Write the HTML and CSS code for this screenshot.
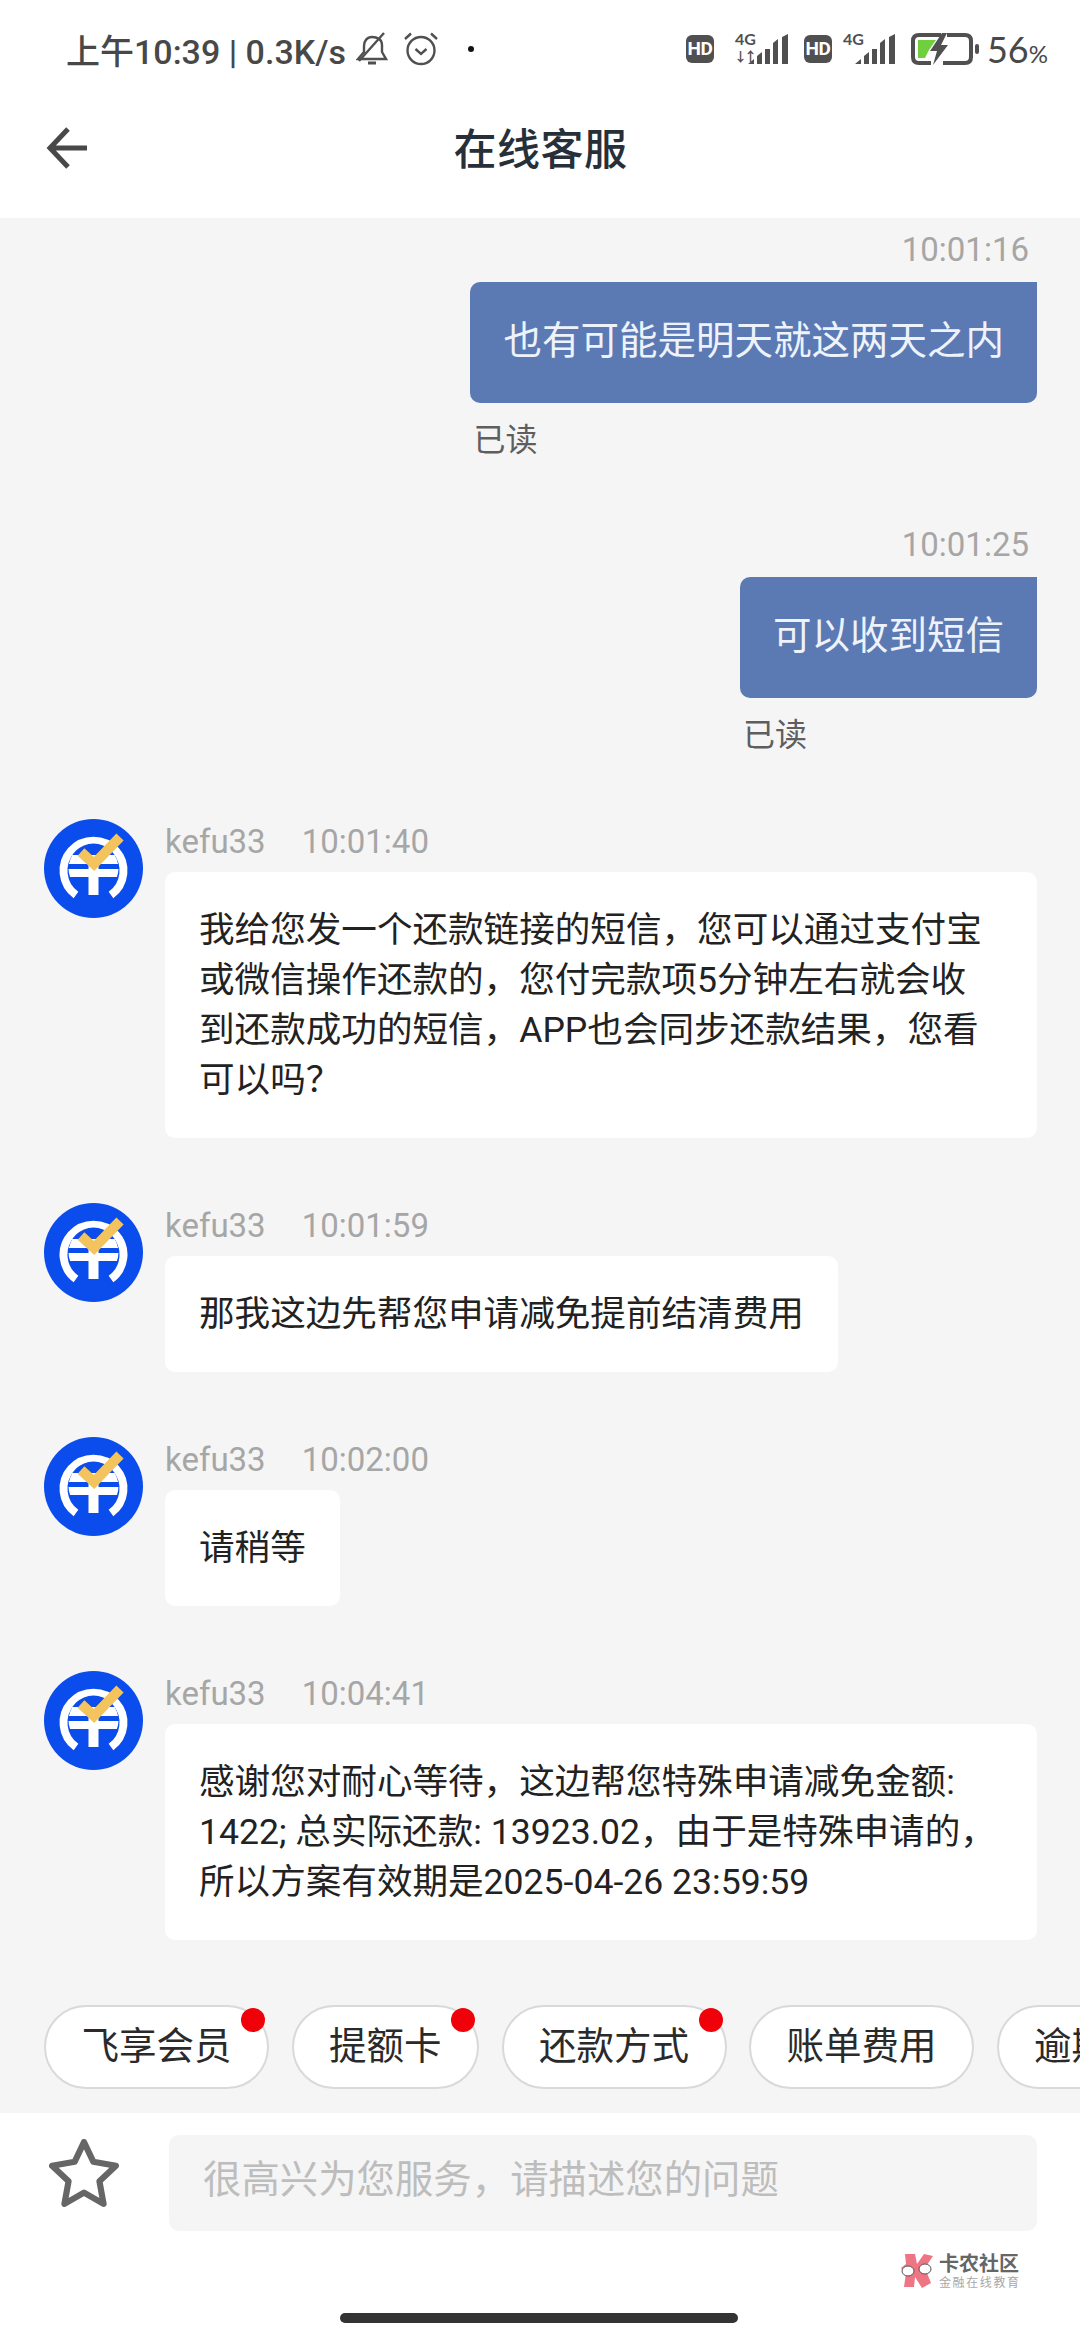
FILE: index.html
```html
<!DOCTYPE html>
<html lang="zh-CN">
<head>
  <meta charset="UTF-8">
  <title>在线客服</title>
  <link rel="stylesheet" href="styles.css">
</head>
<body>
  <svg width="0" height="0" class="defs">
    <clipPath id="ball"><circle cx="49.5" cy="49.5" r="25"/></clipPath>
    <symbol id="avatar" viewBox="0 0 99 99">
      <circle cx="49.5" cy="49.5" r="49.5" fill="#0b4cec"/>
      <path d="M32 76 A30 30 0 1 1 67 76" fill="none" stroke="#fff" stroke-width="8"/>
      <g clip-path="url(#ball)">
        <rect x="24" y="24" width="51" height="52" fill="#0b4cec"/>
        <rect x="24" y="36" width="51" height="9" fill="#fff"/>
        <rect x="24" y="50" width="51" height="8" fill="#fff"/>
      </g>
      <rect x="44.5" y="42" width="10" height="34" fill="#fff"/>
      <path d="M37 33 L50 45 L76 18" fill="none" stroke="#f3c45d" stroke-width="10"/>
    </symbol>
    <symbol id="signal" viewBox="0 0 40 30">
      <path d="M0 30 L6 25 V30Z M9 22 L14 18 V30 H9Z M17 15 H22 V30 H17Z M25 9 L30 5 V30 H25Z M34 3 L40 0 V30 H34Z" fill="#505050"/>
    </symbol>
  </svg>

  <div class="phone">
    <div class="status">
      <div class="status-left">
        <span>上午10:39 | 0.3K/s</span>
        <svg class="bell" width="32" height="34" viewBox="0 0 32 34" fill="none" stroke="#505050" stroke-width="2.4">
          <path d="M2 27 H30 L26 20 V13 C26 7 21 5 16 5 C11 5 8 9 8 14 V20 Z"/>
          <path d="M3 29 L28 1"/>
          <path d="M12 31 H20" stroke-width="3"/>
        </svg>
        <svg class="clock" width="34" height="34" viewBox="0 0 34 34" fill="none" stroke="#505050" stroke-width="2.4">
          <circle cx="17" cy="18.5" r="13.5"/>
          <path d="M11.5 17 L17 22 L22.5 17"/>
          <path d="M1 7 L7 1.5 M33 7 L27 1.5"/>
        </svg>
        <span class="dot"></span>
      </div>
      <div class="status-right">
        <span class="hd">HD</span>
        <div class="net">
          <span class="net-label">4G</span>
          <span class="arrows">↓↑</span>
          <svg class="bars"><use href="#signal"/></svg>
        </div>
        <span class="hd">HD</span>
        <div class="net net-short">
          <span class="net-label">4G</span>
          <svg class="bars"><use href="#signal"/></svg>
        </div>
        <svg class="battery" width="70" height="32" viewBox="0 0 70 32">
          <path d="M30 2 H8 Q2 2 2 8 V24 Q2 30 8 30 H20 M36 2 H54 Q60 2 60 8 V24 Q60 30 54 30 H32" fill="none" stroke="#505050" stroke-width="4"/>
          <path d="M7 7 H25 L18 17 L14 25 H7Z" fill="#6fcf3f"/>
          <path d="M31 0 L19 18 H26 L22 32 L37 12 H30 L36 0Z" fill="#505050"/>
          <rect x="64" y="11" width="4" height="10" rx="2" fill="#505050"/>
        </svg>
        <span class="pct">56<small>%</small></span>
      </div>
    </div>

    <header class="nav">
      <svg class="back" width="42" height="42" viewBox="0 0 42 42" fill="none" stroke="#484848" stroke-width="5">
        <path d="M22 2 L4 21 L22 40 M4 21 H41"/>
      </svg>
      <h1>在线客服</h1>
    </header>

    <main class="chat">
      <div class="mine">
        <div class="time">10:01:16</div>
        <div class="bubble-blue">也有可能是明天就这两天之内</div>
        <div class="read">已读</div>
      </div>
      <div class="mine">
        <div class="time">10:01:25</div>
        <div class="bubble-blue">可以收到短信</div>
        <div class="read">已读</div>
      </div>

      <div class="theirs">
        <svg class="avatar"><use href="#avatar"/></svg>
        <div class="theirs-body">
          <div class="meta"><span>kefu33</span><span>10:01:40</span></div>
          <div class="bubble bubble-wide">我给您发一个还款链接的短信，您可以通过支付宝或微信操作还款的，您付完款项5分钟左右就会收到还款成功的短信，APP也会同步还款结果，您看可以吗？</div>
        </div>
      </div>
      <div class="theirs">
        <svg class="avatar"><use href="#avatar"/></svg>
        <div class="theirs-body">
          <div class="meta"><span>kefu33</span><span>10:01:59</span></div>
          <div class="bubble">那我这边先帮您申请减免提前结清费用</div>
        </div>
      </div>
      <div class="theirs">
        <svg class="avatar"><use href="#avatar"/></svg>
        <div class="theirs-body">
          <div class="meta"><span>kefu33</span><span>10:02:00</span></div>
          <div class="bubble">请稍等</div>
        </div>
      </div>
      <div class="theirs">
        <svg class="avatar"><use href="#avatar"/></svg>
        <div class="theirs-body">
          <div class="meta"><span>kefu33</span><span>10:04:41</span></div>
          <div class="bubble">感谢您对耐心等待，这边帮您特殊申请减免金额: 1422; 总实际还款: 13923.02，由于是特殊申请的，所以方案有效期是2025-04-26 23:59:59</div>
        </div>
      </div>
    </main>

    <div class="chips">
      <div class="chip has-dot">飞享会员</div>
      <div class="chip has-dot">提额卡</div>
      <div class="chip has-dot">还款方式</div>
      <div class="chip">账单费用</div>
      <div class="chip">逾期</div>
    </div>

    <footer class="bottom">
      <div class="input-row">
        <svg class="star" width="70" height="68" viewBox="2 1 68 66" fill="none" stroke="#666" stroke-width="6" stroke-linejoin="round">
          <path d="M36 4 L45 23 L67 27 L51 42 L55 64 L36 53 L17 64 L21 42 L5 27 L27 23Z"/>
        </svg>
        <div class="input">很高兴为您服务，请描述您的问题</div>
      </div>
      <div class="mark">
        <svg width="34" height="36" viewBox="0 0 34 36">
          <path d="M5 1 H15 L17 11 L24 1 L33 3 L25 15 L31 30 L22 35 L15 24 L14 34 L4 34 L6 20 L1 15 L6 11Z" fill="#ee7583"/>
          <ellipse cx="8" cy="18" rx="6" ry="5" fill="#fff" stroke="#555" stroke-width="1"/>
          <ellipse cx="25" cy="16" rx="6" ry="5" fill="#fff" stroke="#555" stroke-width="1"/>
        </svg>
        <div class="mark-text">
          <div class="mark-title">卡农社区</div>
          <div class="mark-sub">金融在线教育</div>
        </div>
      </div>
      <div class="home-bar"></div>
    </footer>
  </div>
</body>
</html>
```

FILE: styles.css
```css
* {
  box-sizing: border-box;
}
body {
  margin: 0;
  background-color: #f5f5f5;
  font-family: Roboto, "Noto Sans CJK SC", sans-serif;
}
.defs {
  display: block;
  height: 0;
}
.phone {
  width: 1080px;
  height: 2340px;
  display: flex;
  flex-direction: column;
  overflow: hidden;
}

/* status bar */
.status {
  height: 98px;
  flex: none;
  padding: 0 32px 0 66px;
  background-color: #fff;
  display: flex;
  justify-content: space-between;
  align-items: center;
  color: #484848;
}
.status-left {
  display: flex;
  align-items: center;
  font-size: 34px;
  font-weight: 500;
  white-space: nowrap;
}
.bell {
  margin-left: 10px;
}
.clock {
  margin-left: 16px;
}
.dot {
  width: 6px;
  height: 6px;
  margin-left: 30px;
  border-radius: 50%;
  background-color: #111;
}
.status-right {
  display: flex;
  align-items: center;
  height: 32px;
}
.hd {
  width: 28px;
  height: 28px;
  border-radius: 6px;
  background-color: #505050;
  color: #fff;
  font-size: 19px;
  font-weight: 700;
  letter-spacing: -0.5px;
  line-height: 28px;
  text-align: center;
}
.net {
  position: relative;
  width: 54px;
  height: 30px;
  margin: 0 16px 0 20px;
}
.net-short {
  width: 53px;
  margin-left: 10px;
}
.net-label {
  position: absolute;
  left: 1px;
  top: -5px;
  font-size: 16px;
  font-weight: 700;
  color: #505050;
  font-family: Lato, sans-serif;
}
.arrows {
  position: absolute;
  left: 0;
  bottom: -1px;
  font-size: 13px;
  font-weight: 700;
  letter-spacing: -3px;
  color: #505050;
}
.bars {
  position: absolute;
  right: 0;
  top: 0;
  width: 40px;
  height: 30px;
}
.pct {
  margin-left: 6px;
  font-family: Lato, sans-serif;
  font-size: 36px;
  color: #484848;
}
.pct small {
  font-size: 24px;
}

/* title */
.nav {
  position: relative;
  height: 120px;
  flex: none;
  padding-bottom: 24px;
  background-color: #fff;
  display: flex;
  align-items: center;
  justify-content: center;
}
.back {
  position: absolute;
  left: 46px;
  top: 29px;
}
.nav h1 {
  margin: 0 0 0 1px;
  font-size: 43px;
  font-weight: 500;
  color: #27303a;
  letter-spacing: 0.5px;
}

/* messages */
.chat {
  flex: 1;
  min-height: 0;
  padding: 12px 43px 0 44px;
  display: flex;
  flex-direction: column;
}
.mine {
  display: flex;
  flex-direction: column;
  align-items: flex-end;
  width: fit-content;
  height: 295px;
  align-self: flex-end;
}
.time {
  height: 40px;
  margin-right: 8px;
  font-size: 33px;
  line-height: 40px;
  color: #a6a6a6;
}
.bubble-blue {
  margin-top: 12px;
  height: 121px;
  padding: 0 33px;
  border-radius: 10px 0 10px 10px;
  background-color: #5b7ab4;
  color: #eef2fa;
  font-size: 38.5px;
  line-height: 117px;
  white-space: nowrap;
}
.read {
  width: 100%;
  padding-left: 3px;
  font-size: 32px;
  line-height: 40px;
  margin-top: 17px;
  color: #5e5e5e;
}
.theirs {
  display: flex;
  margin-bottom: 65px;
}
.avatar {
  width: 99px;
  height: 99px;
  flex: none;
  margin-right: 22px;
}
.theirs-body {
  flex: 1;
  min-width: 0;
  display: flex;
  flex-direction: column;
  align-items: flex-start;
}
.meta {
  display: flex;
  gap: 36px;
  height: 53px;
  font-size: 33px;
  line-height: 45px;
  color: #a6a6a6;
}
.bubble {
  padding: 33px 34px;
  border-radius: 10px;
  background-color: #fff;
  color: #222;
  font-size: 35.6px;
  line-height: 50px;
}
.bubble-wide {
  width: 100%;
  padding-right: 44px;
}

/* quick entries */
.chips {
  height: 108px;
  flex: none;
  padding: 0 0 0 44px;
  display: flex;
  gap: 22.5px;
  overflow: hidden;
}
.chip {
  position: relative;
  flex: none;
  height: 84px;
  padding: 0 35.5px;
  border: 2px solid #d9d9d9;
  border-radius: 42px;
  background-color: #fff;
  color: #2a2a2a;
  font-size: 37.5px;
  line-height: 78px;
  white-space: nowrap;
}
.has-dot::after {
  content: "";
  position: absolute;
  top: 1px;
  right: 2px;
  width: 24px;
  height: 24px;
  border-radius: 50%;
  background-color: #f00008;
}

/* input area */
.bottom {
  height: 227px;
  flex: none;
  position: relative;
  background-color: #fff;
}
.input-row {
  display: flex;
  align-items: flex-start;
  padding: 22px 43px 0 49px;
}
.star {
  margin-top: 4px;
  margin-right: 50px;
  flex: none;
}
.input {
  flex: 1;
  height: 96px;
  padding-left: 34px;
  border-radius: 10px;
  background-color: #f5f5f5;
  color: #bdbdbd;
  font-size: 38.4px;
  line-height: 90px;
}
.mark {
  position: absolute;
  left: 900px;
  top: 140px;
  display: flex;
  gap: 5px;
}
.mark-title {
  font-size: 20px;
  line-height: 22px;
  font-weight: 700;
  color: #666;
}
.mark-sub {
  font-size: 12px;
  line-height: 16px;
  letter-spacing: 1.6px;
  color: #a8a8a8;
}
.home-bar {
  position: absolute;
  left: 340px;
  top: 200px;
  width: 398px;
  height: 10px;
  border-radius: 5px;
  background-color: #333;
}
```
